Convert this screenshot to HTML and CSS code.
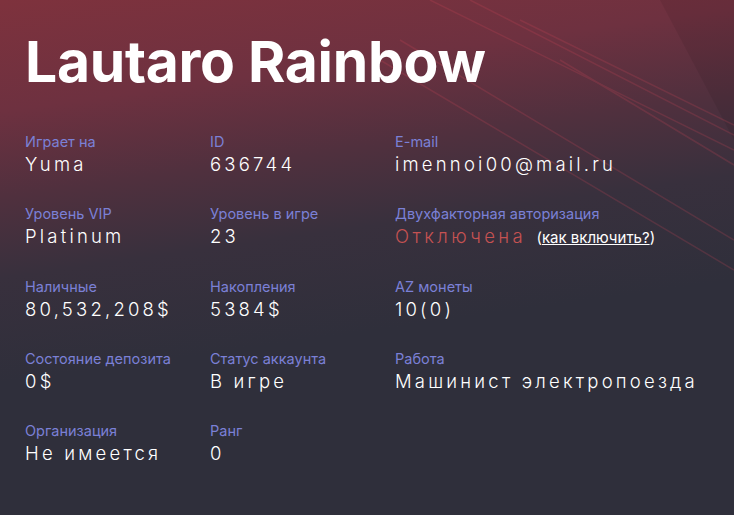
FILE: index.html
```html
<!DOCTYPE html>
<html lang="ru">
<head>
  <meta charset="UTF-8" />
  <title>Lautaro Rainbow</title>
  <link rel="stylesheet" href="styles.css">
</head>
<body>
  <div class="profile">
    <svg class="decor" width="734" height="515" viewBox="0 0 734 515">
      <polygon points="660,0 734,0 734,140" fill="#000" opacity="0.07"/>
      <g stroke="#d8485a" stroke-width="1.5" opacity="0.2">
        <line x1="430" y1="0" x2="734" y2="150"/>
        <line x1="470" y1="0" x2="734" y2="135"/>
        <line x1="520" y1="20" x2="734" y2="125"/>
        <line x1="400" y1="40" x2="734" y2="240"/>
        <line x1="380" y1="60" x2="734" y2="270"/>
        <line x1="560" y1="60" x2="734" y2="165"/>
      </g>
    </svg>

    <h1 class="name">Lautaro Rainbow</h1>

    <div class="stats">
      <div class="stat">
        <div class="label">Играет на</div>
        <div class="value">Yuma</div>
      </div>
      <div class="stat">
        <div class="label">ID</div>
        <div class="value">636744</div>
      </div>
      <div class="stat">
        <div class="label">E-mail</div>
        <div class="value">imennoi00@mail.ru</div>
      </div>

      <div class="stat">
        <div class="label">Уровень VIP</div>
        <div class="value">Platinum</div>
      </div>
      <div class="stat">
        <div class="label">Уровень в игре</div>
        <div class="value">23</div>
      </div>
      <div class="stat">
        <div class="label">Двухфакторная авторизация</div>
        <div class="value">
          <span class="off">Отключена</span>
          <span class="hint">(<a href="#">как включить?</a>)</span>
        </div>
      </div>

      <div class="stat">
        <div class="label">Наличные</div>
        <div class="value">80,532,208$</div>
      </div>
      <div class="stat">
        <div class="label">Накопления</div>
        <div class="value">5384$</div>
      </div>
      <div class="stat">
        <div class="label">AZ монеты</div>
        <div class="value">10(0)</div>
      </div>

      <div class="stat">
        <div class="label">Состояние депозита</div>
        <div class="value">0$</div>
      </div>
      <div class="stat">
        <div class="label">Статус аккаунта</div>
        <div class="value">В игре</div>
      </div>
      <div class="stat">
        <div class="label">Работа</div>
        <div class="value">Машинист электропоезда</div>
      </div>

      <div class="stat">
        <div class="label">Организация</div>
        <div class="value">Не имеется</div>
      </div>
      <div class="stat">
        <div class="label">Ранг</div>
        <div class="value">0</div>
      </div>
    </div>
  </div>
</body>
</html>
```

FILE: styles.css
```css
body {
  margin: 0;
  font-family: 'Inter', 'Noto Sans', sans-serif;
  background-color: #2f2f3b;
}

.profile {
  position: relative;
  overflow: hidden;
  height: 515px;
  padding: 0 25px;
  box-sizing: border-box;
  background: linear-gradient(172deg, #7e323d 0%, #6e3140 18%, #50303e 32%, #38303d 45%, #2f2f3b 62%, #2f2f3b 100%);
}

.decor {
  position: absolute;
  top: 0;
  left: 0;
  pointer-events: none;
}

.name {
  position: relative;
  margin: 0;
  padding-top: 26px;
  font-size: 57px;
  font-weight: 700;
  line-height: 72px;
  color: #ffffff;
  letter-spacing: -0.3px;
}

.stats {
  position: relative;
  display: grid;
  grid-template-columns: 185px 185px 1fr;
  row-gap: 28px;
  margin-top: 35px;
}

.label {
  font-size: 14.5px;
  line-height: 18px;
  color: #7b80d6;
}

.value {
  margin-top: 1px;
  font-size: 18.5px;
  font-weight: 300;
  line-height: 25px;
  color: #ffffff;
  letter-spacing: 3.2px;
  white-space: nowrap;
}

.off {
  color: #c55252;
  letter-spacing: 3.4px;
}

.hint {
  margin-left: 2px;
  font-size: 15px;
  font-weight: 400;
  letter-spacing: 0;
  color: #ffffff;
}

.hint a {
  color: #ffffff;
  text-decoration: underline;
}
```
